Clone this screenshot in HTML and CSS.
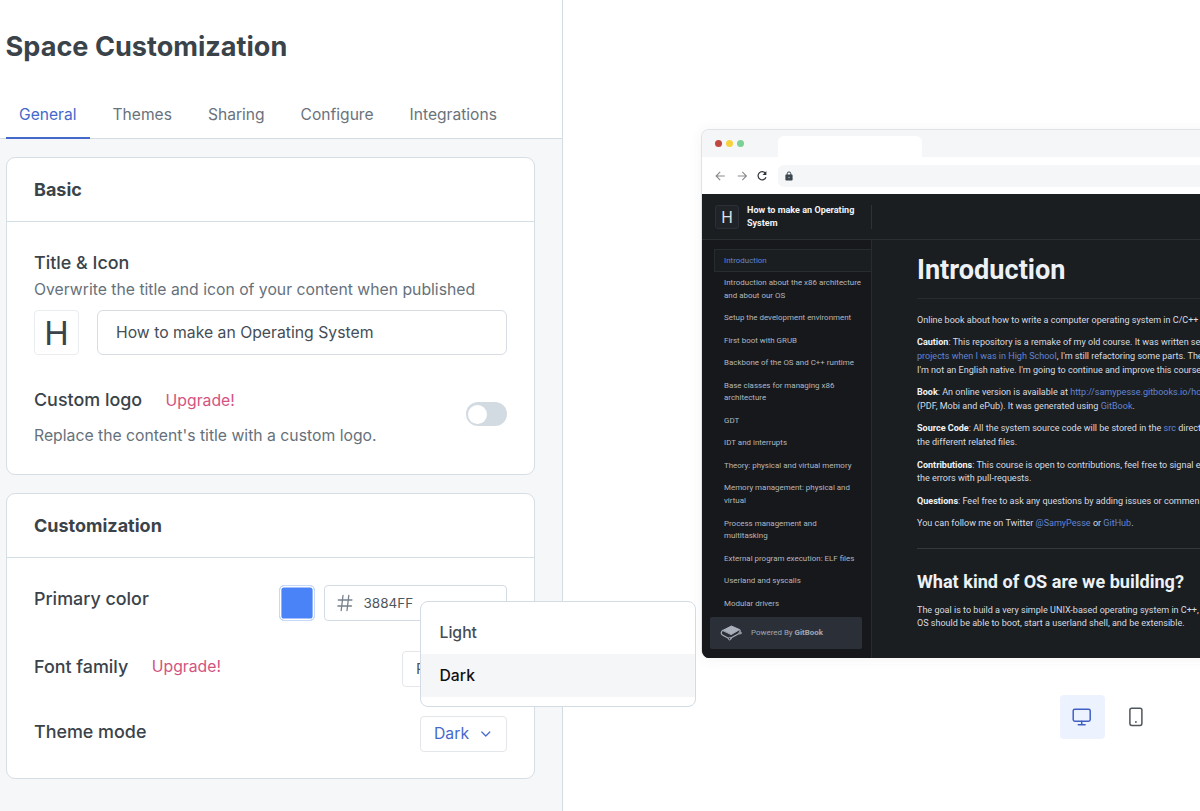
FILE: index.html
```html
<!DOCTYPE html>
<html lang="en">
<head>
<meta charset="utf-8">
<title>Space Customization</title>
<link rel="stylesheet" href="styles.css">
</head>
<body>
<div class="app">
  <section class="panel">
    <header class="panel-head">
      <h1>Space Customization</h1>
      <nav class="tabs">
        <a class="tab active">General</a>
        <a class="tab">Themes</a>
        <a class="tab">Sharing</a>
        <a class="tab">Configure</a>
        <a class="tab">Integrations</a>
      </nav>
    </header>
    <div class="cards">
      <article class="card basic">
        <h2>Basic</h2>
        <div class="card-body">
          <h3>Title &amp; Icon</h3>
          <p class="hint">Overwrite the title and icon of your content when published</p>
          <div class="title-row">
            <div class="letter">H</div>
            <div class="title-input">How to make an Operating System</div>
          </div>
          <div class="logo-row">
            <div>
              <div class="label-line"><h3>Custom logo</h3><a class="upgrade">Upgrade!</a></div>
              <p class="hint">Replace the content's title with a custom logo.</p>
            </div>
            <span class="switch"></span>
          </div>
        </div>
      </article>
      <article class="card custom">
        <h2>Customization</h2>
        <div class="card-body">
          <div class="row color-row">
            <h3>Primary color</h3>
            <div class="color-controls">
              <span class="swatch"></span>
              <div class="hex">
                <svg width="16" height="18" viewBox="0 0 16 18" fill="none" stroke="#76818c" stroke-width="1.3" stroke-linecap="round"><path d="M6 1.5 4.2 16.5M11.8 1.5 10 16.5M1.3 6h13.6M.9 12h13.6"/></svg>
                <span>3884FF</span>
              </div>
            </div>
          </div>
          <div class="row font-row">
            <div class="label-line"><h3>Font family</h3><a class="upgrade">Upgrade!</a></div>
            <div class="select font-select">Roboto</div>
          </div>
          <div class="row mode-row">
            <h3>Theme mode</h3>
            <div class="select mode-select">Dark
              <svg width="12" height="12" viewBox="0 0 12 12" fill="none" stroke="#4568cb" stroke-width="1.2" stroke-linecap="round" stroke-linejoin="round"><path d="M1.8 4l4 4 4-4"/></svg>
              <div class="menu">
                <div class="option">Light</div>
                <div class="option selected">Dark</div>
              </div>
            </div>
          </div>
        </div>
      </article>
    </div>
  </section>
  <main class="preview">
    <div class="browser">
      <div class="tabbar">
        <i class="dot red"></i><i class="dot yellow"></i><i class="dot green"></i>
        <span class="page-tab"></span>
      </div>
      <div class="toolbar">
        <svg class="nav-icon" width="12" height="12" viewBox="0 0 12 12" fill="none" stroke="#85898e" stroke-width="1.1"><path d="M10.8 6H2.2M6.2 1.9 2.1 6l4.1 4.1"/></svg>
        <svg class="nav-icon" width="12" height="12" viewBox="0 0 12 12" fill="none" stroke="#85898e" stroke-width="1.1"><path d="M1.7 6h8.6M6.3 1.9 10.4 6l-4.1 4.1"/></svg>
        <svg class="reload" width="12" height="12" viewBox="0 0 12 12" fill="none" stroke="#2f343a" stroke-width="1.2"><path d="M9.3 3A4.1 4.1 0 1 0 10 7.2"/><path d="M10.4 1v3.9H6.5z" fill="#2f343a" stroke="none"/></svg>
        <div class="address"><svg width="8" height="10" viewBox="0 0 8 10"><path d="M2.2 4V2.7a1.8 1.8 0 0 1 3.6 0V4" fill="none" stroke="#3b454e" stroke-width="1"/><rect x=".4" y="3.6" width="7.2" height="5.9" rx=".8" fill="#3b454e"/><circle cx="4" cy="6.5" r=".8" fill="#9aa1a8"/></svg></div>
      </div>
      <div class="site">
        <div class="site-head">
          <div class="site-brand">
            <span class="site-letter">H</span>
            <strong>How to make an Operating System</strong>
          </div>
        </div>
        <div class="site-main">
          <aside class="toc">
            <a class="current">Introduction</a>
            <a>Introduction about the x86 architecture<br>and about our OS</a>
            <a>Setup the development environment</a>
            <a>First boot with GRUB</a>
            <a>Backbone of the OS and C++ runtime</a>
            <a>Base classes for managing x86<br>architecture</a>
            <a>GDT</a>
            <a>IDT and interrupts</a>
            <a>Theory: physical and virtual memory</a>
            <a>Memory management: physical and<br>virtual</a>
            <a>Process management and<br>multitasking</a>
            <a>External program execution: ELF files</a>
            <a>Userland and syscalls</a>
            <a>Modular drivers</a>
            <div class="powered">
              <svg width="22" height="16" viewBox="0 0 22 16" fill="none" stroke="#a9afbb" stroke-linecap="round" stroke-linejoin="round"><path d="M3 5.3 11.4 1l8.2 3.6-8.2 4.8z" fill="#a9afbb" stroke-width="1"/><path d="M3 5.3C.9 6.3.6 9 2.4 10l6 3.2M10.8 13 20 7.9V5" stroke-width="1.2"/><circle cx="9.7" cy="13.7" r="1.3" fill="#2b3038"/><circle cx="20" cy="8" r="1.1" fill="#2b3038"/></svg>
              <span>Powered By <b>GitBook</b></span>
            </div>
          </aside>
          <div class="doc">
            <h4>Introduction</h4>
            <p>Online book about how to write a computer operating system in C/C++</p>
            <p><b>Caution</b>: This repository is a remake of my old course. It was written se<br><a>projects when I was in High School</a>, I'm still refactoring some parts. The<br>I'm not an English native. I'm going to continue and improve this course</p>
            <p><b>Book</b>: An online version is available at <a>http://samypesse.gitbooks.io/ho</a><br>(PDF, Mobi and ePub). It was generated using <a>GitBook</a>.</p>
            <p><b>Source Code</b>: All the system source code will be stored in the <a>src</a> direct<br>the different related files.</p>
            <p><b>Contributions</b>: This course is open to contributions, feel free to signal e<br>the errors with pull-requests.</p>
            <p><b>Questions</b>: Feel free to ask any questions by adding issues or commen</p>
            <p>You can follow me on Twitter <a>@SamyPesse</a> or <a>GitHub</a>.</p>
            <hr>
            <h5>What kind of OS are we building?</h5>
            <p>The goal is to build a very simple UNIX-based operating system in C++,<br>OS should be able to boot, start a userland shell, and be extensible.</p>
          </div>
        </div>
      </div>
    </div>
    <div class="devices">
      <span class="device on"><svg width="20" height="18" viewBox="0 0 20 18" fill="none" stroke="#4060c4" stroke-width="1.5" stroke-linecap="round" stroke-linejoin="round"><rect x="1.2" y="1.2" width="17" height="12" rx="1.6"/><path d="M9.7 13.2v3.4M6.3 16.7h6.8"/></svg></span>
      <span class="device"><svg width="14" height="20" viewBox="0 0 14 20" fill="none" stroke="#50565d" stroke-width="1.5"><rect x=".9" y="1.2" width="12" height="17.2" rx="1.8"/><circle cx="6.9" cy="15" r=".9" fill="#50565d" stroke="none"/></svg></span>
    </div>
  </main>
</div>
</body>
</html>
```
FILE: styles.css
```css
* { box-sizing: border-box; }
body { margin: 0; font-family: Inter, "Liberation Sans", sans-serif; color: #3b434a; background: #fff; }
h1, h2, h3, h4, h5, p { margin: 0; }
.app { display: flex; width: 1200px; height: 811px; overflow: hidden; }

.panel { flex: none; width: 563px; background: #f5f7f9; border-right: 1px solid #d3dce4; }
.panel-head { height: 139px; display: flex; flex-direction: column; background: #fff; border-bottom: 1px solid #d3dce4; padding: 29px 0 0 5.6px; }
h1 { font-size: 27.1px; line-height: 36px; font-weight: 700; white-space: nowrap; }
.tabs { display: flex; margin-top: auto; margin-bottom: -1px; }
.tab { height: 48px; padding: 0 13.5px; margin-right: 9px; font-size: 15.6px; line-height: 48px; color: #6a737c; }
.tab.active { color: #4568cb; border-bottom: 2px solid #4568cb; }

.cards { padding: 18px 0 0 6px; display: flex; flex-direction: column; gap: 18px; }
.card { width: 529px; background: #fff; border: 1px solid #d6dee4; border-radius: 9px; }
.basic { height: 318px; }
.custom { height: 286px; }
h2 { height: 64px; padding-left: 27px; font-size: 18px; line-height: 63px; font-weight: 700; border-bottom: 1px solid #d3dfe6; }
h3 { font-size: 17.9px; line-height: 24px; font-weight: 500; }
.card-body { padding: 0 27px; }
.basic .card-body { padding-top: 29px; }
.hint { font-size: 15.75px; line-height: 24px; color: #66717b; white-space: nowrap; }
.basic .card-body > .hint { margin-top: 3px; }
.title-row { display: flex; gap: 18px; margin-top: 8px; }
.letter { width: 45px; height: 45px; border: 1px solid #e9edf0; border-radius: 4px; text-align: center; font-size: 33px; line-height: 45px; }
.title-input { flex: 1; height: 45px; border: 1px solid #d7dde2; border-radius: 6px; padding-left: 18px; font-size: 15.75px; line-height: 43px; color: #454d55; }
.logo-row { display: flex; justify-content: space-between; align-items: flex-start; margin-top: 33px; }
.label-line { display: flex; gap: 23.5px; align-items: center; }
.logo-row .hint { margin-top: 12px; }
.upgrade { font-size: 15.75px; color: #d3537f; }
.switch { width: 41px; height: 24px; margin-top: 14px; border-radius: 12px; background: #d3dbe2; display: flex; align-items: center; padding-left: 2px; }
.switch::before { content: ""; width: 19px; height: 19px; border-radius: 50%; background: #fff; }

.row { display: flex; justify-content: space-between; align-items: flex-start; }
.color-row { height: 93px; padding-top: 27px; }
.color-row h3 { margin-top: 2px; }
.color-controls { display: flex; gap: 9px; }
.swatch { width: 36px; height: 36px; border: 1px solid #c7d9f6; border-radius: 5px; background: #4a82f7; box-shadow: inset 0 0 0 1.4px #fff; }
.hex { width: 183px; height: 36px; border: 1px solid #d3dce4; border-radius: 4px; display: flex; align-items: center; gap: 11px; padding: 0 0 1px 11.5px; font-size: 13.5px; color: #4e565e; }
.font-row { height: 65px; }
.font-row .label-line { margin-top: 3.5px; }
.select { height: 36px; border: 1px solid #e3e7eb; border-radius: 4px; font-size: 15.75px; line-height: 34px; }
.font-select { width: 105px; padding-left: 13px; color: #4e565e; font-size: 15px; }
.mode-row h3 { margin-top: 3.5px; }
.mode-select { position: relative; width: 87px; display: flex; align-items: center; gap: 11px; padding-left: 13px; color: #4568cb; }
.menu { position: absolute; left: -1px; top: -116px; width: 276px; height: 106px; padding-top: 9px; background: #fff; border: 1px solid #d3dce4; border-radius: 8px; font-weight: 500; }
.option { height: 43px; padding-left: 18.5px; line-height: 43px; color: #454d55; }
.option.selected { background: #f5f6f8; color: #111; }

.preview { flex: 1; min-width: 0; padding-top: 129px; display: flex; flex-direction: column; }
.browser { margin-left: 138px; width: 540px; height: 529px; border: 1px solid #dfe3e8; border-bottom: 0; border-radius: 8px; overflow: hidden; background: #fff; box-shadow: 0 1px 14px rgba(60, 75, 90, .06); flex: none; }
.tabbar { height: 27px; background: #f5f6f8; display: flex; padding-left: 13px; gap: 4px; }
.dot { width: 7px; height: 7px; border-radius: 50%; margin-top: 10px; }
.red { background: #c0483f; }
.yellow { background: #f6d33c; }
.green { background: #7bd196; }
.page-tab { margin-left: 30px; margin-top: 6px; width: 144px; background: #fff; border-radius: 6px 6px 0 0; }
.toolbar { height: 37px; display: flex; align-items: center; padding-left: 12px; }
.nav-icon { margin-right: 10px; }
.reload { margin-left: -2px; }
.address { flex: 1; height: 22px; margin-left: 10px; background: #f5f6f8; border-radius: 6px; display: flex; align-items: center; padding-left: 7px; }

.site { height: 464px; background: #1a1e21; color: #d7dbe0; font-family: Roboto, "Liberation Sans", sans-serif; }
.site-head { height: 46px; padding: 11px 0 0 13px; border-bottom: 1px solid #2b2f33; }
.site-brand { display: flex; width: 157px; height: 24px; border-right: 1px solid #2e3236; }
.site-letter { flex: none; width: 24px; height: 24px; background: #202429; border: 1px solid #2c3036; border-radius: 3px; font: 15.5px/23px Inter, sans-serif; text-align: center; color: #dfe3e8; }
.site-brand strong { width: 122px; margin: -1px 0 0 8px; font-size: 9.05px; line-height: 13.4px; font-weight: 700; color: #f1f3f6; }
.site-main { display: flex; height: 418px; }
.toc { flex: none; width: 170px; background: #17181c; border-right: 1px solid #282c30; padding: 9px 0 0 12px; font-size: 7.95px; line-height: 12.55px; color: #b2b7bd; white-space: nowrap; }
.toc a { display: block; padding: 5px 0 5px 10px; }
.toc .current { height: 23px; border: 1px solid #282c30; border-right: 0; padding: 4.5px 0 0 9px; color: #6484cf; background: #1a1e21; }
.powered { display: flex; align-items: center; width: 152px; height: 32px; margin: 2px 0 0 -4px; padding-left: 10px; gap: 9px; background: #2b3038; border-radius: 2px; color: #a0a7b1; }
.doc { padding-left: 45px; font-size: 9.04px; line-height: 13.6px; white-space: nowrap; }
.doc p { margin-bottom: 9px; }
.doc b { color: #f1f3f6; }
.doc a { color: #6484cf; }
.doc h4 { height: 59px; margin-bottom: 14.8px; width: 320px; padding-top: 13px; border-bottom: 1px solid #282c30; font-size: 27.1px; line-height: 34px; color: #edf1f5; }
.doc hr { width: 320px; height: 1px; border: 0; margin: 17px 0 20px; background: #34383c; }
.doc h5 { font-size: 18.08px; line-height: 26px; color: #edf1f5; margin-bottom: 8.6px; }

.devices { display: flex; gap: 9px; margin: 37px 0 0 496.5px; }
.device { width: 45px; height: 44px; border-radius: 4px; display: flex; align-items: center; justify-content: center; }
.device.on { background: #edf3fe; }
```
